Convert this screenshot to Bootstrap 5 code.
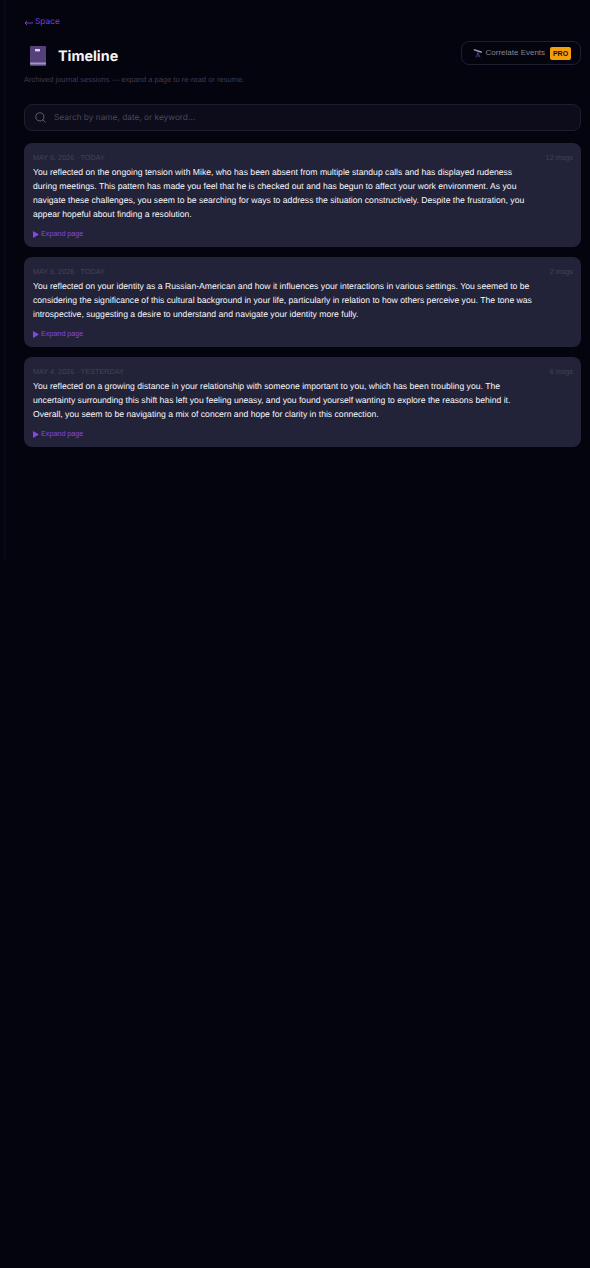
<!DOCTYPE html>
<html lang="en"><head><meta charset="utf-8"><title>Timeline</title>
<link href="https://cdn.jsdelivr.net/npm/bootstrap@5.3.0/dist/css/bootstrap.min.css" rel="stylesheet">
<style>
html,body{background:#04040e;height:100%}
body{font-family:"Liberation Sans",Arial,sans-serif;color:#fff;min-height:1268px;position:relative;text-rendering:geometricPrecision}
.rail{position:absolute;left:4px;top:0;width:2px;height:560px;background:#07071a}
.shell{padding:17px 9px 0 24px}
.back{font-size:8.3px;color:#7c3fe0;line-height:11px;text-decoration:none;display:flex;align-items:center;gap:2px;margin-bottom:10px;font-family:Inter,"Liberation Sans",sans-serif}
.arrowic{width:9px;height:6px;flex:none}
.head-row{height:36px}
.bookic{width:16px;height:20px;margin-left:6px;margin-right:12px;flex:none}
.ttl{font-size:14.3px;font-weight:700;color:#f4f4f8;margin:0;padding-top:2px;line-height:20px;font-family:Inter,"Liberation Sans",sans-serif}
.sub{font-size:7.55px;color:#3d3b52;line-height:11px;margin:0 0 19px}
.corr{border:1px solid #1e1e30;border-radius:8px;height:24px;width:120px;margin-top:-6px;padding:0 9px 0 11px;font-size:8px;color:#868690;background:transparent;white-space:nowrap}
.teles{width:10px;height:10px;margin-right:2.5px;flex:none}
.pro{background:#f59e0b;color:#111;font-size:7px;font-weight:700;width:21px;height:13px;line-height:13px;text-align:center;border-radius:2px;flex:none}
.srch{border:1px solid #1e1e30;border-radius:8px;background:#0c0c1a;height:27px;padding:0 10px;margin-bottom:12px}
.srch span{font-family:Inter,"Liberation Sans",sans-serif;font-size:8.3px;color:#4a4a60;padding-top:1px}
.entry{background:#222238;border-radius:8px;padding:9px 8px 8px 9px;margin-bottom:10px;border:0}
.meta{font-size:7.25px;color:#44445a;line-height:12px;margin-bottom:1px}
.txt{font-size:8.65px;line-height:14px;color:#f8f8fb;margin:0 36px 8px 0}
.exp{font-size:7.2px;color:#8148ea;line-height:10px;padding:0;background:none;border:0;gap:2px}
.tri{width:6px;height:7px;flex:none}
</style></head><body>
<div class="rail"></div>
<main class="shell">
<a class="back" href="#"><svg class="arrowic" viewBox="0 0 9 6"><path d="M9 3H1M3 1 1 3l2 2" stroke="#7c3fe0" stroke-width=".9" fill="none"/></svg>Space</a>
<div class="d-flex justify-content-between align-items-center head-row">
 <div class="d-flex align-items-center">
  <svg class="bookic" viewBox="0 0 16 20"><rect x="0" y="0" width="16" height="20" rx="1" fill="#54407a"/><rect x="0" y="16.5" width="16" height="2" fill="#a08fc8"/><rect x="5" y="3" width="5" height="2.4" fill="#d8d2e4"/></svg>
  <h1 class="ttl">Timeline</h1>
 </div>
 <button class="corr d-flex align-items-center" type="button">
  <svg class="teles" viewBox="0 0 10 10"><path d="M1 1 9 3.6 8.5 5 .6 2.2Z" fill="#a79cc0"/><path d="M5 4.5 3 9.5M5 4.5 7 9.5M5 4.5V9" stroke="#4c3d78" stroke-width=".9" fill="none"/></svg>
  <span>Correlate Events</span><span class="pro ms-auto">PRO</span>
 </button>
</div>
<p class="sub">Archived journal sessions — expand a page to re-read or resume.</p>
<div class="srch d-flex align-items-center gap-2">
 <svg width="11" height="11" viewBox="0 0 12 12" fill="none" stroke="#66667a" stroke-width="1"><circle cx="5.3" cy="5.3" r="4.4"/><path d="m8.5 8.5 3 3"/></svg>
 <span>Search by name, date, or keyword…</span>
</div>
<section class="entry">
 <div class="d-flex justify-content-between meta"><span>MAY 6, 2026 · TODAY</span><span>12 msgs</span></div>
 <p class="txt">You reflected on the ongoing tension with Mike, who has been absent from multiple standup calls and has displayed rudeness during meetings. This pattern has made you feel that he is checked out and has begun to affect your work environment. As you navigate these challenges, you seem to be searching for ways to address the situation constructively. Despite the frustration, you appear hopeful about finding a resolution.</p>
 <button class="exp d-flex align-items-center" type="button"><svg class="tri" viewBox="0 0 6 7"><path d="M0 0 6 3.5 0 7Z" fill="#8148ea"/></svg>Expand page</button>
</section>
<section class="entry">
 <div class="d-flex justify-content-between meta"><span>MAY 6, 2026 · TODAY</span><span>2 msgs</span></div>
 <p class="txt">You reflected on your identity as a Russian-American and how it influences your interactions in various settings. You seemed to be considering the significance of this cultural background in your life, particularly in relation to how others perceive you. The tone was introspective, suggesting a desire to understand and navigate your identity more fully.</p>
 <button class="exp d-flex align-items-center" type="button"><svg class="tri" viewBox="0 0 6 7"><path d="M0 0 6 3.5 0 7Z" fill="#8148ea"/></svg>Expand page</button>
</section>
<section class="entry">
 <div class="d-flex justify-content-between meta"><span>MAY 4, 2026 · YESTERDAY</span><span>6 msgs</span></div>
 <p class="txt">You reflected on a growing distance in your relationship with someone important to you, which has been troubling you. The uncertainty surrounding this shift has left you feeling uneasy, and you found yourself wanting to explore the reasons behind it. Overall, you seem to be navigating a mix of concern and hope for clarity in this connection.</p>
 <button class="exp d-flex align-items-center" type="button"><svg class="tri" viewBox="0 0 6 7"><path d="M0 0 6 3.5 0 7Z" fill="#8148ea"/></svg>Expand page</button>
</section>
</main>
<script src="https://cdn.jsdelivr.net/npm/bootstrap@5.3.0/dist/js/bootstrap.bundle.min.js"></script>
</body></html>
